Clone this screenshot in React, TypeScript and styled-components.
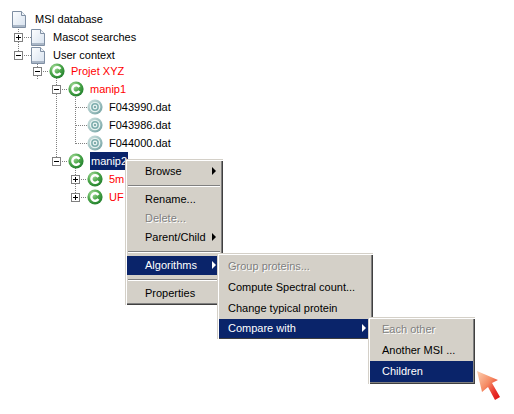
import React from 'react'
import styled, { createGlobalStyle } from 'styled-components'

const Global = createGlobalStyle`
  html, body { margin: 0; padding: 0; background: #fff; }
  body { font-family: "Liberation Sans", Arial, sans-serif; font-size: 11px; color: #000; }
`

const Page = styled.div`
  position: relative;
  width: 514px;
  height: 414px;
  overflow: hidden;
  background: #fff;
`

const Lines = styled.svg`
  position: absolute;
  left: 0;
  top: 0;
`

const Tree = styled.div`
  position: relative;
  display: flex;
  flex-direction: column;
  padding-top: 10px;
`

const Row = styled.div<{ $level: number; $pull?: number }>`
  display: flex;
  align-items: center;
  height: 18px;
  padding-left: ${p => 14 + p.$level * 19}px;
  margin-top: ${p => p.$pull || 0}px;
`

const Slot = styled.div`
  flex: none;
  width: 16px;
`

const Expander = styled.div`
  position: relative;
  box-sizing: border-box;
  width: 9px;
  height: 9px;
  background: #fff;
  border: 1px solid #808080;

  &::before {
    content: "";
    position: absolute;
    left: 1px;
    top: 3px;
    width: 5px;
    height: 1px;
    background: #000;
  }
`

const Plus = styled(Expander)`
  &::after {
    content: "";
    position: absolute;
    left: 3px;
    top: 1px;
    width: 1px;
    height: 5px;
    background: #000;
  }
`

const Label = styled.span<{ $red?: boolean; $gap?: number; $selected?: boolean }>`
  display: flex;
  align-items: center;
  height: 18px;
  margin-left: ${p => p.$gap ?? 6}px;
  padding: ${p => (p.$selected ? '0 1px' : '0')};
  white-space: nowrap;
  color: ${p => (p.$selected ? '#fff' : p.$red ? '#f00' : '#000')};
  background: ${p => (p.$selected ? '#0a246a' : 'transparent')};
`

const Menu = styled.div<{ $x: number; $y: number; $w: number; $h: number; $top: number; $inset: number }>`
  position: absolute;
  left: ${p => p.$x}px;
  top: ${p => p.$y}px;
  width: ${p => p.$w}px;
  height: ${p => p.$h}px;
  box-sizing: border-box;
  padding: ${p => p.$top}px 2px 0 2px;
  background: #d4d0c8;
  box-shadow: inset 1px 1px 0 #d4d0c8, inset 2px 2px 0 #fff, inset -1px -1px 0 #404040, inset -2px -2px 0 #808080;
  --inset: ${p => p.$inset}px;
`

const Item = styled.div<{ $active?: boolean; $disabled?: boolean; $h?: number }>`
  display: flex;
  align-items: center;
  justify-content: space-between;
  box-sizing: border-box;
  height: ${p => p.$h || 19}px;
  padding: 0 5px 1px var(--inset);
  white-space: nowrap;
  color: ${p => (p.$active ? '#fff' : p.$disabled ? '#808080' : '#000')};
  background: ${p => (p.$active ? '#0a246a' : 'transparent')};
  text-shadow: ${p => (p.$disabled ? '1px 1px 0 #fff' : 'none')};
`

const Caret = styled.i<{ $active?: boolean }>`
  display: block;
  width: 0;
  height: 0;
  border-style: solid;
  border-width: 4px 0 4px 4px;
  border-color: transparent transparent transparent ${p => (p.$active ? '#fff' : '#000')};
`

const Separator = styled.div`
  height: 9px;
  box-sizing: border-box;
  padding-top: 4px;

  &::before {
    content: "";
    display: block;
    margin: 0 1px;
    height: 1px;
    background: #808080;
    border-bottom: 1px solid #fff;
  }
`

const Pointer = styled.svg`
  position: absolute;
  left: 472px;
  top: 366px;
`

const DocSvg = styled.svg<{ $shift?: number }>`
  flex: none;
  margin-left: ${p => p.$shift || 0}px;
`

const RoundSvg = styled.svg`
  flex: none;
`

const DocIcon = ({ shift }: { shift?: number }) => (
  <DocSvg $shift={shift} width="14" height="17" viewBox="0 0 14 17">
    <defs>
      <linearGradient id="docFill" x1="0" y1="0" x2="1" y2="1">
        <stop offset="0" stopColor="#fdfeff" />
        <stop offset="1" stopColor="#d6e1ee" />
      </linearGradient>
    </defs>
    <path d="M.5.5H9.5L13.5 4.5V16.5H.5Z" fill="url(#docFill)" stroke="#7f8fa3" />
    <path d="M9.5.5V4.5H13.5" fill="#eef3f8" stroke="#7f8fa3" />
    <path d="M1 14H13V16H1Z" fill="#a9b6c6" />
  </DocSvg>
)

const ContextIcon = () => (
  <RoundSvg width="16" height="16" viewBox="0 0 16 16">
    <defs>
      <radialGradient id="greenBall" cx="35%" cy="28%" r="80%">
        <stop offset="0" stopColor="#a8dc9c" />
        <stop offset=".5" stopColor="#4ea94c" />
        <stop offset="1" stopColor="#1c7a28" />
      </radialGradient>
    </defs>
    <circle cx="8" cy="8" r="7.6" fill="url(#greenBall)" />
    <path d="M11.4 6A3.8 3.8 0 1 0 11.4 10" fill="none" stroke="#fff" strokeWidth="2.4" />
  </RoundSvg>
)

const FileIcon = () => (
  <RoundSvg width="16" height="16" viewBox="0 0 16 16">
    <defs>
      <linearGradient id="fileRing" x1="0" y1="0" x2="1" y2="1">
        <stop offset="0" stopColor="#d4e6e4" />
        <stop offset="1" stopColor="#6f9fa0" />
      </linearGradient>
    </defs>
    <circle cx="8" cy="8" r="7.6" fill="url(#fileRing)" />
    <circle cx="8" cy="8" r="5.3" fill="#e6f2f0" />
    <circle cx="8" cy="8" r="3.9" fill="#7eaeae" />
    <circle cx="8" cy="8" r="2.4" fill="#e6f2f0" />
    <circle cx="8" cy="8" r="1.1" fill="#6c9c9e" />
  </RoundSvg>
)

const guide = [
  'M18.5 27V33', 'M18.5 42V51', 'M24 37.5H31', 'M24 55.5H31',
  'M37.5 60V80', 'M43 71.5H49',
  'M56.5 78V157', 'M62 89.5H68', 'M62 161.5H68',
  'M75.5 95V143.5', 'M75.5 107.5H87', 'M75.5 125.5H87', 'M75.5 143.5H87',
  'M75.5 168V193', 'M81 179.5H87', 'M81 197.5H87',
]

const TreeLines = () => (
  <Lines width="120" height="210" shapeRendering="crispEdges">
    {guide.map(d => (
      <path key={d} d={d} fill="none" stroke="#808080" strokeDasharray="1 1" />
    ))}
  </Lines>
)

const App = () => (
  <Page>
    <Global />
    <TreeLines />
    <Tree>
      <Row $level={0}>
        <DocIcon shift={-2} />
        <Label $gap={9}>MSI database</Label>
      </Row>
      <Row $level={0}>
        <Slot><Plus /></Slot>
        <DocIcon shift={1} />
        <Label $gap={8}>Mascot searches</Label>
      </Row>
      <Row $level={0}>
        <Slot><Expander /></Slot>
        <DocIcon shift={1} />
        <Label $gap={8}>User context</Label>
      </Row>
      <Row $level={1} $pull={-2}>
        <Slot><Expander /></Slot>
        <ContextIcon />
        <Label $red>Projet XYZ</Label>
      </Row>
      <Row $level={2}>
        <Slot><Expander /></Slot>
        <ContextIcon />
        <Label $red>manip1</Label>
      </Row>
      <Row $level={3}>
        <Slot />
        <FileIcon />
        <Label>F043990.dat</Label>
      </Row>
      <Row $level={3}>
        <Slot />
        <FileIcon />
        <Label>F043986.dat</Label>
      </Row>
      <Row $level={3}>
        <Slot />
        <FileIcon />
        <Label>F044000.dat</Label>
      </Row>
      <Row $level={2}>
        <Slot><Expander /></Slot>
        <ContextIcon />
        <Label $selected>manip2</Label>
      </Row>
      <Row $level={3}>
        <Slot><Plus /></Slot>
        <ContextIcon />
        <Label $red>5m</Label>
      </Row>
      <Row $level={3}>
        <Slot><Plus /></Slot>
        <ContextIcon />
        <Label $red>UF</Label>
      </Row>
    </Tree>

    <Menu $x={125} $y={159} $w={98} $h={146} $top={3} $inset={18}>
      <Item>Browse<Caret /></Item>
      <Separator />
      <Item>Rename...</Item>
      <Item $disabled>Delete...</Item>
      <Item>Parent/Child<Caret /></Item>
      <Separator />
      <Item $active>Algorithms<Caret $active /></Item>
      <Separator />
      <Item>Properties</Item>
    </Menu>

    <Menu $x={217} $y={253} $w={156} $h={86} $top={3} $inset={9}>
      <Item $h={21} $disabled>Group proteins...</Item>
      <Item $h={21}>Compute Spectral count...</Item>
      <Item $h={21}>Change typical protein</Item>
      <Item $active>Compare with<Caret $active /></Item>
    </Menu>

    <Menu $x={368} $y={317} $w={107} $h={67} $top={2} $inset={12}>
      <Item $h={21} $disabled>Each other</Item>
      <Item $h={21}>Another MSI ...</Item>
      <Item $h={21} $active>Children</Item>
    </Menu>

    <Pointer width="34" height="38" viewBox="0 0 34 38">
      <defs>
        <linearGradient id="arrowFill" x1="0" y1="0" x2="1" y2="1">
          <stop offset="0" stopColor="#fcd2b4" />
          <stop offset=".45" stopColor="#f58a62" />
          <stop offset=".75" stopColor="#e8302c" />
          <stop offset="1" stopColor="#dc1010" />
        </linearGradient>
      </defs>
      <path d="M5 5L10 26L16 21L23 34L28 31L20 17L26 14Z" fill="url(#arrowFill)" />
    </Pointer>
  </Page>
)

export default App
